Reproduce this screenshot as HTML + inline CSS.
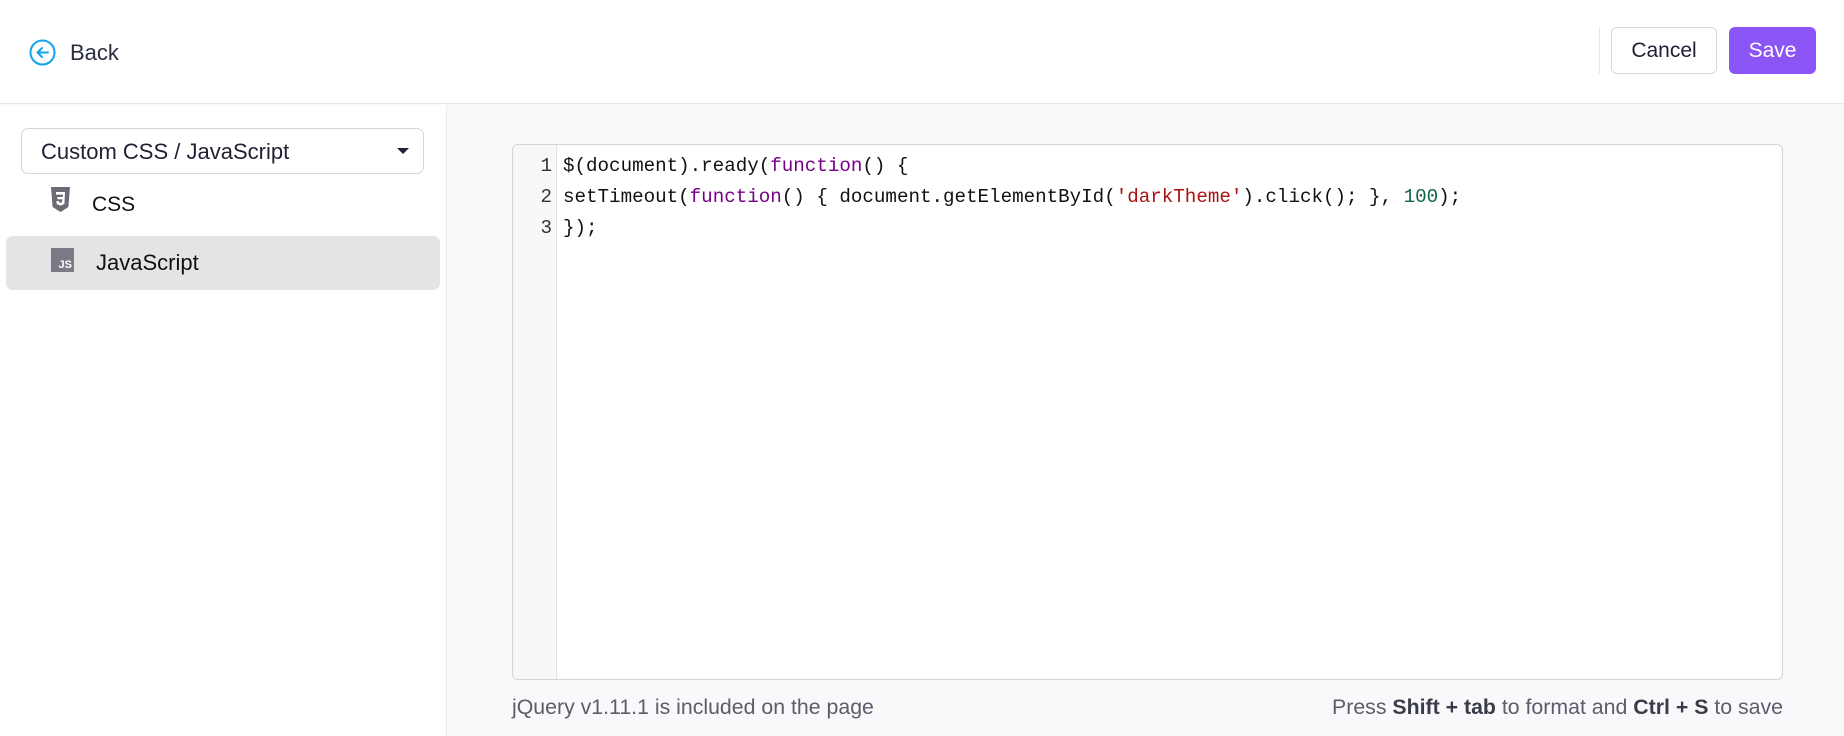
<!DOCTYPE html>
<html><head><meta charset="utf-8"><style>
*{box-sizing:border-box;margin:0;padding:0}
body{width:1844px;height:736px;overflow:hidden;background:#f9f9fb;font-family:"Liberation Sans",Arial,sans-serif;color:#222;position:relative}
.hdr{position:absolute;left:0;top:0;width:1844px;height:104px;background:#fff;border-bottom:1px solid #e8e8ec}
.back{position:absolute;left:29px;top:39px;display:flex;align-items:center;font-size:22px;color:#2a2d3e}
.back svg{margin-right:14px}
.div{position:absolute;left:1599px;top:27px;width:1px;height:47px;background:#e6e6e6}
.btn{position:absolute;top:27px;height:47px;border-radius:6px;font-size:21px;display:flex;align-items:center;justify-content:center}
.cancel{left:1611px;width:106px;border:1px solid #d8d8dc;background:#fff;color:#1f2133}
.save{left:1729px;width:87px;background:#8b55f6;color:#fff}
.side{position:absolute;left:0;top:105px;width:447px;height:631px;background:#fff;border-right:1px solid #ececf0}
.sel{position:absolute;left:21px;top:23px;width:403px;height:46px;border:1px solid #d6d6da;border-radius:7px;font-size:22px;color:#1f2133;padding:10px 0 0 19px}
.sel:after{content:"";position:absolute;right:14px;top:19px;border-left:6px solid transparent;border-right:6px solid transparent;border-top:6px solid #1f2133}
.item{position:absolute;left:6px;width:434px;height:54px;border-radius:7px;font-size:22px;color:#111}
.ed{position:absolute;left:512px;top:144px;width:1271px;height:536px;background:#fff;border:1px solid #d4d4d8;border-radius:6px;overflow:hidden}
.gut{position:absolute;left:0;top:0;width:44px;height:100%;background:#f8f8f8;border-right:1px solid #e4e4e4}
.code{position:absolute;left:0;top:6px;font-family:"Liberation Mono",monospace;font-size:19.2px;line-height:31px;white-space:pre;color:#111}
.ln{display:inline-block;width:50px;text-align:right;padding-right:11px;color:#333}
.k{color:#770088}.s{color:#aa1111}.n{color:#116644}
.foot{position:absolute;top:695px;font-size:21.3px;color:#5b5d6b}
.foot b{color:#3a3c4a}
</style></head><body>
<div class="hdr">
 <div class="back"><svg width="27" height="27" viewBox="0 0 27 27"><circle cx="13.5" cy="13.5" r="12" fill="none" stroke="#0ea5e9" stroke-width="2"/><path d="M19 13.5H8.5M13 9l-4.5 4.5L13 18" fill="none" stroke="#0ea5e9" stroke-width="2" stroke-linecap="round" stroke-linejoin="round"/></svg>Back</div>
 <div class="div"></div>
 <div class="btn cancel">Cancel</div>
 <div class="btn save">Save</div>
</div>
<div class="side">
 <div class="sel">Custom CSS / JavaScript</div>
 <div class="item" style="top:77px"><svg style="position:absolute;left:45px;top:5px" width="19" height="25" viewBox="0 0 19 25"><path d="M0 0h19l-1.6 20L9.5 25 1.6 20z" fill="#6b6b75"/><path d="M5 5h9l-.6 12-3.9 1.6-3.9-1.6-.2-3h2.6v1.2l1.5.6 1.5-.6.2-3H6.4V10h5.5l.1-2.4H5z" fill="#fff"/></svg><span style="position:absolute;left:86px;top:11px;font-size:21px">CSS</span></div>
 <div class="item" style="top:131px;background:#e4e4e7"><div style="position:absolute;left:45px;top:12px;width:23px;height:24px;background:#7b7a85"><span style="position:absolute;right:2px;bottom:1px;color:#fff;font-size:11px;font-weight:bold">JS</span></div><span style="position:absolute;left:90px;top:14px">JavaScript</span></div>
</div>
<div class="ed"><div class="gut"></div>
<div class="code"><span class="ln">1</span>$(document).ready(<span class="k">function</span>() {
<span class="ln">2</span>setTimeout(<span class="k">function</span>() { document.getElementById(<span class="s">'darkTheme'</span>).click(); }, <span class="n">100</span>);
<span class="ln">3</span>});</div></div>
<div class="foot" style="left:512px">jQuery v1.11.1 is included on the page</div>
<div class="foot" style="right:61px">Press <b>Shift + tab</b> to format and <b>Ctrl + S</b> to save</div>
</body></html>
